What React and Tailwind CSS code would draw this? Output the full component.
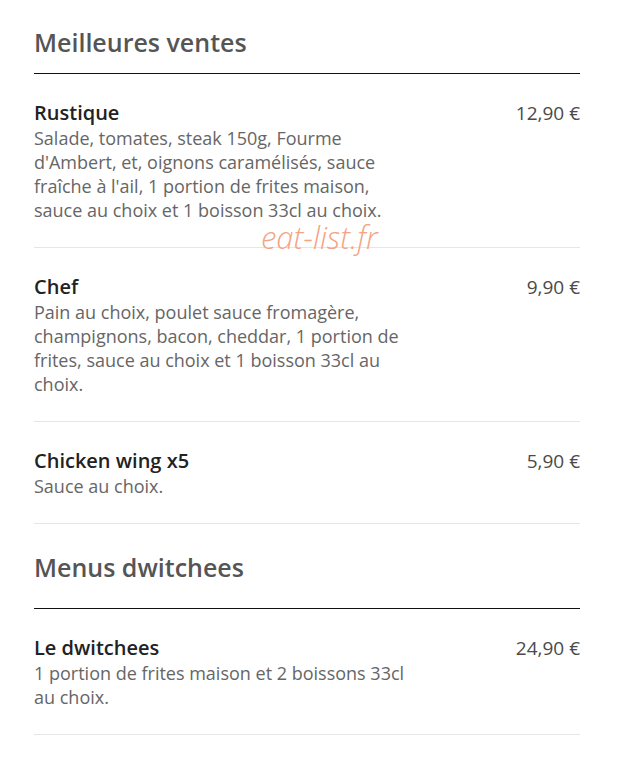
const SECTIONS = [
  {
    title: 'Meilleures ventes',
    items: [
      {
        name: 'Rustique',
        price: '12,90 €',
        desc: "Salade, tomates, steak 150g, Fourme d'Ambert, et, oignons caramélisés, sauce fraîche à l'ail, 1 portion de frites maison, sauce au choix et 1 boisson 33cl au choix.",
      },
      {
        name: 'Chef',
        price: '9,90 €',
        desc: 'Pain au choix, poulet sauce fromagère, champignons, bacon, cheddar, 1 portion de frites, sauce au choix et 1 boisson 33cl au choix.',
      },
      { name: 'Chicken wing x5', price: '5,90 €', desc: 'Sauce au choix.' },
    ],
  },
  {
    title: 'Menus dwitchees',
    items: [
      {
        name: 'Le dwitchees',
        price: '24,90 €',
        desc: '1 portion de frites maison et 2 boissons 33cl au choix.',
      },
    ],
  },
]

export default function App() {
  return (
    <div className="relative min-h-[761px] w-[625px] bg-white px-[34px] pt-[26px] font-['Open_Sans',sans-serif]">
      {SECTIONS.map((section, i) => (
        <section key={section.title} className={i > 0 ? 'mt-[27px]' : ''}>
          <h2
            className={
              'w-[546px] border-b border-[#111] text-[25px] leading-[32px] font-semibold text-[#555] ' +
              (i === 0 ? 'pb-[15px]' : 'pb-[25px]')
            }
          >
            {section.title}
          </h2>
          {section.items.map((item) => (
            <div
              key={item.name}
              className="flex w-[546px] justify-between border-b border-[#e6e6e6] pt-[26px] pb-[25px]"
            >
              <div className="w-[385px]">
                <div className="text-[20px] leading-[26px] font-semibold text-[#222]">{item.name}</div>
                <p className="text-[18px] leading-[24px] text-[#666]">{item.desc}</p>
              </div>
              <div className="text-[19px] leading-[26px] text-[#4a4a4a]">{item.price}</div>
            </div>
          ))}
        </section>
      ))}

      {/* watermark sits over the first divider */}
      <div className="absolute top-[216px] left-[261px] text-[31px] leading-[42px] font-light italic text-[#f2a584]">
        eat-list.fr
      </div>
    </div>
  )
}
